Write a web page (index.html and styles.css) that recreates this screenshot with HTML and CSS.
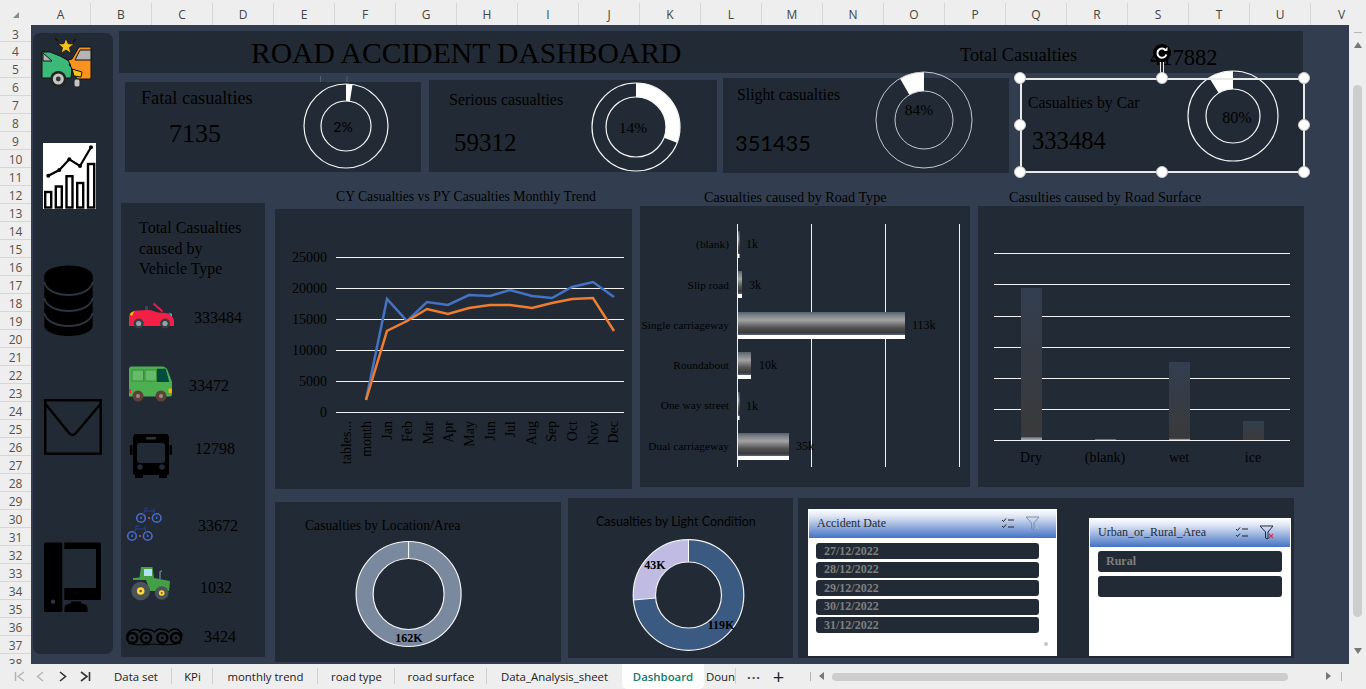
FILE: index.html
```html
<!DOCTYPE html>
<html>
<head>
  <meta charset="UTF-8">
  <title>Road Accident Dashboard</title>
  <link rel="stylesheet" href="styles.css">
</head>
<body>
<div class="app">
  <div class="col-head">
    <div class="corner"><svg width="6" height="6" viewBox="0 0 8 8"><path d="M8 0V8H0Z" fill="#8a8a8a"/></svg></div>
    <div class="col col-a">A</div><div class="col">B</div><div class="col">C</div><div class="col">D</div><div class="col">E</div><div class="col">F</div><div class="col">G</div><div class="col">H</div><div class="col">I</div><div class="col">J</div><div class="col">K</div><div class="col">L</div><div class="col">M</div><div class="col">N</div><div class="col">O</div><div class="col">P</div><div class="col">Q</div><div class="col">R</div><div class="col">S</div><div class="col">T</div><div class="col">U</div><div class="col col-v">V</div>
  </div>

  <div class="mid">
    <div class="row-head">
      <div class="rw rw-first">3</div><div class="rw">4</div><div class="rw">5</div><div class="rw">6</div><div class="rw">7</div><div class="rw">8</div><div class="rw">9</div><div class="rw">10</div><div class="rw">11</div><div class="rw">12</div><div class="rw">13</div><div class="rw">14</div><div class="rw">15</div><div class="rw">16</div><div class="rw">17</div><div class="rw">18</div><div class="rw">19</div><div class="rw">20</div><div class="rw">21</div><div class="rw">22</div><div class="rw">23</div><div class="rw">24</div><div class="rw">25</div><div class="rw">26</div><div class="rw">27</div><div class="rw">28</div><div class="rw">29</div><div class="rw">30</div><div class="rw">31</div><div class="rw">32</div><div class="rw">33</div><div class="rw">34</div><div class="rw">35</div><div class="rw">36</div><div class="rw">37</div><div class="rw">38</div>
    </div>

    <div class="sheet">
      <div class="sidebar">
        <svg class="side-icon ic-crash" viewBox="42 38 50 50">
          <path d="M42 52L50 52L60 56L71 62L69 65L72 68L71 78L42 78Z" fill="#3cb878" stroke="#111" stroke-width="1"/>
          <path d="M43 53L52 61L43 61Z" fill="#b5b5b5" stroke="#111" stroke-width="1"/>
          <circle cx="58.3" cy="79" r="8" fill="#222"/>
          <circle cx="58.3" cy="79" r="5.5" fill="#c4c4c4"/>
          <circle cx="58.3" cy="79" r="2.4" fill="#333"/>
          <path d="M91 47H79L72 59L68 60L70 64L72 70L77 79H91Z" fill="#f7931e" stroke="#111" stroke-width="1"/>
          <path d="M80 50H91V60H75Z" fill="#b5b5b5" stroke="#111" stroke-width="1"/>
          <path d="M72 69L82 72L81 77L74 76Z" fill="#f5c518" stroke="#111" stroke-width="1"/>
          <rect x="74" y="79" width="6" height="8" rx="2" fill="#c4c4c4" stroke="#222"/>
          <path d="M66 38L68.1 43.7L74.1 43.9L69.4 47.6L71 53.4L66 50L61 53.4L62.6 47.6L57.9 43.9L63.9 43.7Z" fill="#f5c518" stroke="#111" stroke-width=".8"/>
          <path d="M55 38L58 41M76 39L73 42" stroke="#111" stroke-width="1.2"/>
        </svg>
        <svg class="side-icon ic-chart" viewBox="43 143 53 66">
          <rect x="43" y="143" width="53" height="66" fill="#fff"/>
          <g fill="none" stroke="#000" stroke-width="2.4">
            <rect x="45.2" y="192" width="6" height="15.5"/>
            <rect x="55.8" y="186.5" width="6" height="21"/>
            <rect x="66.5" y="176.2" width="6" height="31.3"/>
            <rect x="77.2" y="183" width="6" height="24.5"/>
            <rect x="88" y="164" width="6.2" height="43.5"/>
          </g>
          <path d="M48.3 175.7L59.3 170L69.3 159.3L80 166L91 147.3" fill="none" stroke="#000" stroke-width="2.2"/>
          <g fill="#000"><circle cx="48.3" cy="175.7" r="2"/><circle cx="59.3" cy="170" r="2"/><circle cx="69.3" cy="159.3" r="2"/><circle cx="80" cy="166" r="2"/><circle cx="91" cy="147.3" r="2"/></g>
        </svg>
        <svg class="side-icon ic-db" viewBox="44 265 49 71">
          <ellipse cx="68.5" cy="276" rx="24.2" ry="10.5" fill="#000"/>
          <path d="M44.3 276V325.5C44.3 331.5 55 336 68.5 336S92.7 331.5 92.7 325.5V276Z" fill="#000"/>
          <g fill="none" stroke="#2b3542" stroke-width="1.8">
            <path d="M44.3 282C46 291 58 295 68.5 295S91 291 92.7 282"/>
            <path d="M44.3 298C46 307 58 311 68.5 311S91 307 92.7 298"/>
            <path d="M44.3 313C46 322 58 326 68.5 326S91 322 92.7 313"/>
          </g>
        </svg>
        <svg class="side-icon ic-mail" viewBox="44 399 58 56">
          <rect x="45.2" y="400.2" width="55.5" height="53.5" fill="none" stroke="#000" stroke-width="2.4"/>
          <path d="M45.5 404L69 433Q72.5 437 76 433L100.5 404" fill="none" stroke="#000" stroke-width="2.4"/>
        </svg>
        <svg class="side-icon ic-pc" viewBox="44 542 57 70">
          <rect x="44" y="542.5" width="18.3" height="69.5" rx="1.5" fill="#000"/>
          <circle cx="53" cy="601.7" r="2.2" fill="#2b3542"/>
          <path d="M64.3 542.5H99.5Q101 542.5 101 544V598.5Q101 600 99.5 600H64.3V588H96V549H64.3Z" fill="#000"/>
          <path d="M64.5 612V607Q66 603.5 71 603.5V601.5H81V603.5Q86 603.5 87.5 607V612Z" fill="#000"/>
        </svg>
      </div>

      <div class="main">
        <div class="title-bar">
          <h1 class="dash-title">ROAD ACCIDENT DASHBOARD</h1>
          <span class="total-label">Total Casualties</span>
          <span class="total-value">417882</span>
        </div>

        <div class="kpi-row">
          <div class="kpi kpi-fatal">
            <div>
              <div class="kpi-name">Fatal casualties</div>
              <div class="kpi-value">7135</div>
            </div>
            <svg class="ring" viewBox="300 82 92 90">
              <path d="M320.5 82V76M347 82V76" stroke="#56616f" stroke-width="1"/>
              <circle cx="346" cy="126" r="33.5" fill="none" stroke="#fff" stroke-width="17" pathLength="360" stroke-dasharray="9 351" transform="rotate(-90 346 126)"/>
              <circle cx="346" cy="126" r="42" class="ring-line"/>
              <circle cx="346" cy="126" r="25" class="ring-line"/>
              <text x="343" y="132" text-anchor="middle" class="ring-sans">2%</text>
            </svg>
          </div>
          <div class="kpi kpi-serious">
            <div>
              <div class="kpi-name">Serious casualties</div>
              <div class="kpi-value">59312</div>
            </div>
            <svg class="ring" viewBox="590 80 92 92">
              <circle cx="636" cy="127" r="37" fill="none" stroke="#fff" stroke-width="14" pathLength="360" stroke-dasharray="111 249" transform="rotate(-90 636 127)"/>
              <circle cx="636" cy="127" r="44" class="ring-line"/>
              <circle cx="636" cy="127" r="30" class="ring-line"/>
              <text x="633" y="133" text-anchor="middle" class="ring-serif">14%</text>
            </svg>
          </div>
          <div class="kpi kpi-slight">
            <div>
              <div class="kpi-name">Slight casualties</div>
              <div class="kpi-value">351435</div>
            </div>
            <svg class="ring ring-wide" viewBox="875 78 100 95">
              <circle cx="924" cy="120" r="38.5" fill="none" stroke="#fff" stroke-width="19" pathLength="360" stroke-dasharray="30 330" transform="rotate(-120 924 120)"/>
              <circle cx="924" cy="120" r="48" class="ring-line ring-soft"/>
              <circle cx="924" cy="120" r="29" class="ring-line ring-soft"/>
              <text x="919" y="115" text-anchor="middle" class="ring-serif">84%</text>
            </svg>
          </div>
          <div class="kpi kpi-car">
            <div>
              <div class="kpi-name">Casualties by Car</div>
              <div class="kpi-value">333484</div>
            </div>
            <svg class="ring ring-wide" viewBox="1185 78 100 95">
              <circle cx="1233" cy="116" r="36" fill="none" stroke="#fff" stroke-width="18" pathLength="360" stroke-dasharray="32 328" transform="rotate(-122 1233 116)"/>
              <circle cx="1233" cy="116" r="45" class="ring-line"/>
              <circle cx="1233" cy="116" r="27" class="ring-line"/>
              <text x="1237" y="123" text-anchor="middle" class="ring-car">80%</text>
            </svg>
            <div class="selection">
              <span class="rotate-stem"></span>
              <span class="rotate-handle">
                <svg width="18" height="18" viewBox="0 0 18 18"><path d="M12.8 6.5A4.6 4.6 0 1 0 13.4 10.5" fill="none" stroke="#fff" stroke-width="2"/><path d="M10.8 6.8H14.5V3Z" fill="#fff"/></svg>
              </span>
              <span class="hd hd-tl"></span><span class="hd hd-tc"></span><span class="hd hd-tr"></span>
              <span class="hd hd-ml"></span><span class="hd hd-mr"></span>
              <span class="hd hd-bl"></span><span class="hd hd-bc"></span><span class="hd hd-br"></span>
            </div>
          </div>
        </div>

        <div class="lower">
          <div class="vehicles">
            <div class="veh-title">Total Casualties<br>caused by<br>Vehicle Type</div>

            <div class="veh veh-car">
              <svg class="veh-icon" viewBox="129 302 45 26">
                <path d="M153.5 302.5L162.5 310.5" stroke="#e91e4b" stroke-width="2"/>
                <rect x="145" y="305" width="3" height="6" fill="#37474f"/>
                <path d="M129 325V316Q130 310 137 309.5L150 309L158 311.5L166 312Q172 313 174 319V325Z" fill="#f31f45"/>
                <path d="M129.5 313.5Q131 310.5 134.5 310L132 315Z" fill="#ffb300"/>
                <path d="M168.5 311.5L172 313V316Z" fill="#26c6da"/>
                <circle cx="138.7" cy="322.5" r="5" fill="#3a3f44"/><circle cx="138.7" cy="322.5" r="2.6" fill="#90a4ae"/>
                <circle cx="165" cy="322.5" r="5" fill="#3a3f44"/><circle cx="165" cy="322.5" r="2.6" fill="#90a4ae"/>
              </svg>
              <span class="veh-value">333484</span>
            </div>

            <div class="veh veh-van">
              <svg class="veh-icon" viewBox="129 365 43 37">
                <path d="M129 368Q129 365.5 131.5 365.5H162Q166 365.5 167.5 369L172 381V393Q172 395.5 170 395.5H129Z" fill="#4caf50"/>
                <rect x="132" y="369" width="11.5" height="11" fill="#66bb6a" stroke="#388e3c"/>
                <rect x="145" y="369" width="11.5" height="11" fill="#66bb6a" stroke="#388e3c"/>
                <path d="M157 367.7H165.7L169.3 381H157Z" fill="#004d40"/>
                <rect x="129" y="388" width="2" height="4" fill="#e53935"/>
                <rect x="168.5" y="387.5" width="3.5" height="4.5" rx="1" fill="#ffb300"/>
                <circle cx="138" cy="395" r="5.5" fill="#5d4037"/><circle cx="138" cy="395" r="2" fill="#a1887f"/>
                <circle cx="161" cy="395" r="5.5" fill="#5d4037"/><circle cx="161" cy="395" r="2" fill="#a1887f"/>
              </svg>
              <span class="veh-value">33472</span>
            </div>

            <div class="veh veh-bus">
              <svg class="veh-icon" viewBox="130 433 42 44">
                <rect x="130" y="444" width="2.5" height="10" fill="#000"/>
                <rect x="169.5" y="444" width="2.5" height="10" fill="#000"/>
                <path d="M136 433H166Q169 433 169 437V472Q169 474 167 474V477H159V474H143V477H135V474Q133 474 133 472V437Q133 433 136 433Z" fill="#000"/>
                <rect x="146" y="436" width="10" height="2.5" rx="1" fill="#2b3542"/>
                <rect x="137" y="442" width="28" height="20" rx="3" fill="#222b35"/>
                <circle cx="140" cy="466" r="2.8" fill="#222b35"/>
                <circle cx="162" cy="466" r="2.8" fill="#222b35"/>
              </svg>
              <span class="veh-value">12798</span>
            </div>

            <div class="veh veh-bike">
              <svg class="veh-icon" viewBox="127 506 35 35">
                <g fill="none" stroke="#4a6cc9" stroke-width="1.6">
                  <circle cx="141" cy="517" r="4.3"/><circle cx="156.7" cy="517" r="4.3"/>
                  <circle cx="132" cy="535" r="4.3"/><circle cx="147.7" cy="535" r="4.3"/>
                </g>
                <g fill="none" stroke="#2a3f8f" stroke-width="1">
                  <path d="M141 517L145 510H154L156.7 517M145 510V507H148M154 510V507"/>
                  <path d="M132 535L136 528H145L147.7 535M136 528V525H139M145 528V525"/>
                </g>
                <g fill="#4a6cc9"><circle cx="141" cy="517" r="1"/><circle cx="156.7" cy="517" r="1"/><circle cx="132" cy="535" r="1"/><circle cx="147.7" cy="535" r="1"/></g>
                <circle cx="149" cy="517" r="1" fill="#d9534f"/>
                <circle cx="140" cy="535" r="1" fill="#d9534f"/>
              </svg>
              <span class="veh-value">33672</span>
            </div>

            <div class="veh veh-tractor">
              <svg class="veh-icon" viewBox="132 564 38 36">
                <path d="M160 578V571.5Q160 570 162 570" fill="none" stroke="#607d8b" stroke-width="1.5"/>
                <path d="M141 566H152.5L154 577L170 580L169 590H150L146 579H133V577L139.5 576.5Z" fill="#43a047"/>
                <rect x="144" y="568" width="8" height="7" fill="#b3e0f5"/>
                <circle cx="140.7" cy="590" r="9.3" fill="#4a5358"/>
                <circle cx="140.7" cy="590" r="3.8" fill="#fdd835"/><circle cx="140.7" cy="590" r="1.3" fill="#795548"/>
                <circle cx="161.7" cy="592" r="6.8" fill="#4a5358"/>
                <circle cx="161.7" cy="592" r="2.8" fill="#fdd835"/><circle cx="161.7" cy="592" r="1" fill="#795548"/>
              </svg>
              <span class="veh-value">1032</span>
            </div>

            <div class="veh veh-track">
              <svg class="veh-icon" viewBox="126 627 57 18">
                <path d="M126.5 635Q129 629 134 628.5Q139 628 140 631Q143 627 147 628.5Q151 628 154.5 631Q158 627 162 628.5Q166 628 168.5 631Q172 627 177 628.5Q181 630 182.5 635" fill="none" stroke="#000" stroke-width="1.5"/>
                <g fill="none" stroke="#000" stroke-width="2.4">
                  <circle cx="132.3" cy="637" r="5"/><circle cx="146" cy="637" r="5"/><circle cx="162.3" cy="637" r="5"/><circle cx="176" cy="637" r="5"/>
                </g>
                <g fill="#000"><circle cx="132.3" cy="637" r="1.3"/><circle cx="146" cy="637" r="1.3"/><circle cx="162.3" cy="637" r="1.3"/><circle cx="176" cy="637" r="1.3"/></g>
                <path d="M128 642.5Q139 645 154 643Q170 645 181 642" fill="none" stroke="#000" stroke-width="1"/>
              </svg>
              <span class="veh-value">3424</span>
            </div>
          </div>

          <div class="charts">
            <div class="chart-row">
              <div class="chart chart-trend">
                <div class="chart-title">CY Casualties vs PY Casualties Monthly Trend</div>
                <svg class="plot" width="357" height="280" viewBox="275 209 357 280">
                  <g stroke="#f2f2f2" stroke-width="1">
                    <path d="M336 257.5H624M336 288.5H624M336 319.5H624M336 350.5H624M336 381.5H624M336 412.5H624"/>
                  </g>
                  <g class="tick" text-anchor="end">
                    <text x="327" y="262">25000</text><text x="327" y="293">20000</text><text x="327" y="324">15000</text><text x="327" y="355">10000</text><text x="327" y="386">5000</text><text x="327" y="417">0</text>
                  </g>
                  <polyline points="366,400 387,299 407,321 427,302 448,305 469,295 490,296 510,290 532,296 552,298 572,287 593,282 614,297" fill="none" stroke="#4472c4" stroke-width="2.5"/>
                  <polyline points="366,400 387,331 407,321 427,309 448,314 469,308 490,305 510,305 532,308 552,303 572,299 593,298 614,331" fill="none" stroke="#ed7d31" stroke-width="2.5"/>
                  <g class="tick" text-anchor="end">
                    <text transform="translate(351 421) rotate(-90)">tables...</text>
                    <text transform="translate(371 421) rotate(-90)">month</text>
                    <text transform="translate(392 421) rotate(-90)">Jan</text>
                    <text transform="translate(412 421) rotate(-90)">Feb</text>
                    <text transform="translate(433 421) rotate(-90)">Mar</text>
                    <text transform="translate(453 421) rotate(-90)">Apr</text>
                    <text transform="translate(474 421) rotate(-90)">May</text>
                    <text transform="translate(495 421) rotate(-90)">Jun</text>
                    <text transform="translate(515 421) rotate(-90)">Jul</text>
                    <text transform="translate(536 421) rotate(-90)">Aug</text>
                    <text transform="translate(556 421) rotate(-90)">Sep</text>
                    <text transform="translate(577 421) rotate(-90)">Oct</text>
                    <text transform="translate(598 421) rotate(-90)">Nov</text>
                    <text transform="translate(618 421) rotate(-90)">Dec</text>
                  </g>
                </svg>
              </div>

              <div class="chart chart-road">
                <div class="chart-title">Casualties caused by Road Type</div>
                <svg class="plot" width="330" height="281" viewBox="640 206 330 281">
                  <defs>
                    <linearGradient id="barShade" x1="0" y1="0" x2="0" y2="1">
                      <stop offset="0" stop-color="#566270"/>
                      <stop offset=".12" stop-color="#7c8085"/>
                      <stop offset=".3" stop-color="#a3a3a3"/>
                      <stop offset=".58" stop-color="#525252"/>
                      <stop offset=".76" stop-color="#3b3b3b"/>
                      <stop offset=".83" stop-color="#4f5a6c"/>
                      <stop offset=".86" stop-color="#5d6a80"/>
                      <stop offset=".87" stop-color="#fff"/>
                      <stop offset="1" stop-color="#fff"/>
                    </linearGradient>
                  </defs>
                  <path d="M737.5 224V467M811.5 224V467M885.5 224V467M959.5 224V467" stroke="#f2f2f2" stroke-width="1"/>
                  <g fill="url(#barShade)">
                    <rect x="738" y="231" width="1.5" height="27"/>
                    <rect x="738" y="271" width="4" height="27"/>
                    <rect x="738" y="312" width="167" height="27"/>
                    <rect x="738" y="352" width="13" height="27"/>
                    <rect x="738" y="392" width="1.5" height="28"/>
                    <rect x="738" y="433" width="51" height="27"/>
                  </g>
                  <g class="tick-sm" text-anchor="end">
                    <text x="729" y="248">(blank)</text>
                    <text x="729" y="289">Slip road</text>
                    <text x="729" y="329">Single carriageway</text>
                    <text x="729" y="369">Roundabout</text>
                    <text x="729" y="409">One way street</text>
                    <text x="729" y="450">Dual carriageway</text>
                  </g>
                  <g class="tick-val">
                    <text x="746" y="248">1k</text>
                    <text x="749" y="289">3k</text>
                    <text x="912" y="329">113k</text>
                    <text x="759" y="369">10k</text>
                    <text x="746" y="410">1k</text>
                    <text x="796" y="450">35k</text>
                  </g>
                </svg>
              </div>

              <div class="chart chart-surface">
                <div class="chart-title">Casulties caused by Road Surface</div>
                <svg class="plot" width="326" height="281" viewBox="978 206 326 281">
                  <defs>
                    <linearGradient id="surfShade" x1="0" y1="0" x2="0" y2="1">
                      <stop offset="0" stop-color="#323e4f"/>
                      <stop offset=".9" stop-color="#3a3a3c"/>
                      <stop offset=".98" stop-color="#3a3a3c"/>
                      <stop offset=".985" stop-color="#7a8498"/>
                      <stop offset="1" stop-color="#aaa"/>
                    </linearGradient>
                    <linearGradient id="iceShade" x1="0" y1="0" x2="0" y2="1">
                      <stop offset="0" stop-color="#323e4f"/>
                      <stop offset="1" stop-color="#3c3a3a"/>
                    </linearGradient>
                  </defs>
                  <path d="M994 253.5H1290M994 284.5H1290M994 316.5H1290M994 347.5H1290M994 378.5H1290M994 409.5H1290M994 440.5H1290" stroke="#f2f2f2" stroke-width="1"/>
                  <rect x="1021" y="288" width="21" height="152" fill="url(#surfShade)"/>
                  <rect x="1095" y="439" width="21" height="1" fill="#6a7280"/>
                  <rect x="1169" y="362" width="21" height="78" fill="url(#surfShade)"/>
                  <rect x="1243" y="421" width="21" height="19" fill="url(#iceShade)"/>
                  <g class="tick" text-anchor="middle">
                    <text x="1031" y="462">Dry</text>
                    <text x="1105" y="462">(blank)</text>
                    <text x="1179" y="462">wet</text>
                    <text x="1253" y="462">ice</text>
                  </g>
                </svg>
              </div>
            </div>

            <div class="bottom-row">
              <svg class="panel-loc" width="286" height="160" viewBox="275 502 286 160">
                <text x="305" y="530" class="title-loc">Casualties by Location/Area</text>
                <circle cx="408.6" cy="594" r="44" fill="none" stroke="#7b899f" stroke-width="17"/>
                <circle cx="408.6" cy="594" r="52.5" class="ring-line"/>
                <circle cx="408.6" cy="594" r="35.5" class="ring-line"/>
                <path d="M408.6 541.5V558.5" stroke="#fff" stroke-width="1"/>
                <text x="409" y="642" text-anchor="middle" class="pie-val">162K</text>
              </svg>
              <svg class="panel-light" width="225" height="160" viewBox="568 498 225 160">
                <text x="596" y="526" class="title-sans">Casualties by Light Condition</text>
                <circle cx="688.5" cy="595" r="44.2" fill="none" stroke="#3b5a82" stroke-width="22"/>
                <circle cx="688.5" cy="595" r="44.2" fill="none" stroke="#bfbbe3" stroke-width="22" pathLength="360" stroke-dasharray="95 265" transform="rotate(175 688.5 595)"/>
                <circle cx="688.5" cy="595" r="55.3" class="ring-line"/>
                <circle cx="688.5" cy="595" r="33" class="ring-line"/>
                <path d="M688.5 540V562M633.5 600L655.5 598" stroke="#fff" stroke-width="1"/>
                <text x="655" y="569" text-anchor="middle" class="pie-val">43K</text>
                <text x="721" y="629" text-anchor="middle" class="pie-val">119K</text>
              </svg>

              <div class="slicer-panel">
                <div class="slicer slicer-date">
                  <div class="slicer-head">
                    <span class="slicer-name">Accident Date</span>
                    <svg class="head-icon" width="14" height="14" viewBox="0 0 14 14"><path d="M1 3L2.5 4.5L5 1.5M1 9L2.5 10.5L5 7.5M7 3H13M7 10H13" fill="none" stroke="#222" stroke-width="1"/></svg>
                    <svg class="head-icon head-funnel" width="16" height="15" viewBox="0 0 16 15"><path d="M1 1H14L9 7V14L6.5 13V7Z" fill="none" stroke="#7d8ea8" stroke-width="1"/><path d="M10 9L14 13M14 9L10 13" stroke="#a9b6cc" stroke-width="1"/></svg>
                  </div>
                  <div class="items items-date">
                    <div class="item">27/12/2022</div>
                    <div class="item">28/12/2022</div>
                    <div class="item">29/12/2022</div>
                    <div class="item">30/12/2022</div>
                    <div class="item">31/12/2022</div>
                  </div>
                  <span class="slicer-dot"></span>
                </div>
                <div class="slicer slicer-area">
                  <div class="slicer-head">
                    <span class="slicer-name">Urban_or_Rural_Area</span>
                    <svg class="head-icon" width="14" height="14" viewBox="0 0 14 14"><path d="M1 3L2.5 4.5L5 1.5M1 9L2.5 10.5L5 7.5M7 3H13M7 10H13" fill="none" stroke="#222" stroke-width="1"/></svg>
                    <svg class="head-icon head-funnel" width="16" height="15" viewBox="0 0 16 15"><path d="M1 1H14L9 7V14L6.5 13V7Z" fill="none" stroke="#222b35" stroke-width="1"/><path d="M10 9L14 13M14 9L10 13" stroke="#d9304f" stroke-width="1.2"/></svg>
                  </div>
                  <div class="items items-area">
                    <div class="item">Rural</div>
                    <div class="item"></div>
                  </div>
                </div>
              </div>
            </div>
          </div>
        </div>
      </div>
    </div>

    <div class="vscroll">
      <span class="vs-dash"></span>
      <svg class="vs-arrow" width="8" height="6" viewBox="0 0 8 6"><path d="M4 0L8 6H0Z" fill="#777"/></svg>
      <span class="vs-thumb"></span>
      <svg class="vs-arrow vs-down" width="8" height="6" viewBox="0 0 8 6"><path d="M0 0H8L4 6Z" fill="#777"/></svg>
    </div>
  </div>

  <div class="tabs">
    <div class="tab-nav">
      <svg class="nav-first" width="12" height="11" viewBox="0 0 12 11"><path d="M1.5 1V10M10 1L4 5.500L10 10" fill="none" stroke="#b5b5b5" stroke-width="1.5"/></svg>
      <svg class="nav-prev" width="8" height="11" viewBox="0 0 8 11"><path d="M7 1L1.5 5.500L7 10" fill="none" stroke="#b5b5b5" stroke-width="1.5"/></svg>
      <svg class="nav-next" width="8" height="11" viewBox="0 0 8 11"><path d="M1 1L6.5 5.500L1 10" fill="none" stroke="#333" stroke-width="1.6"/></svg>
      <svg class="nav-last" width="12" height="11" viewBox="0 0 12 11"><path d="M10.5 1V10M2 1L8 5.500L2 10" fill="none" stroke="#333" stroke-width="1.6"/></svg>
    </div>
    <div class="tab t1">Data set</div>
    <div class="tab t2">KPi</div>
    <div class="tab t3">monthly trend</div>
    <div class="tab t4">road type</div>
    <div class="tab t5">road surface</div>
    <div class="tab t6">Data_Analysis_sheet</div>
    <div class="tab tab-on">Dashboard</div>
    <div class="tab t8">Doun</div>
    <div class="tab-more">···</div>
    <div class="tab-add">+</div>
    <span class="hs-sep"></span>
    <svg class="hs-left" width="5" height="8" viewBox="0 0 5 8"><path d="M5 0V8L0 4Z" fill="#777"/></svg>
    <span class="hs-thumb"></span>
    <svg class="hs-right" width="5" height="8" viewBox="0 0 5 8"><path d="M0 0V8L5 4Z" fill="#777"/></svg>
    <span class="hs-sep hs-sep-end"></span>
  </div>
</div>
</body>
</html>
```

FILE: styles.css
```css
* {
  box-sizing: border-box;
}
body {
  margin: 0;
  font-family: "Liberation Serif", serif;
  color: #000;
  background: #eeeeee;
}
svg {
  display: block;
  overflow: visible;
  flex: none;
}
.app {
  width: 1366px;
  height: 689px;
  display: flex;
  flex-direction: column;
  overflow: hidden;
}

/* sheet headers */
.col-head {
  height: 25px;
  display: flex;
  padding-top: 3px;
  background: #eeeeee;
  font-family: "Open Sans", sans-serif;
  font-size: 12px;
  color: #444;
  overflow: hidden;
}
.corner {
  width: 31px;
  flex: none;
  display: flex;
  justify-content: flex-end;
  align-items: flex-end;
  padding: 0 12px 7px 0;
}
.col {
  width: 61px;
  flex: none;
  display: flex;
  align-items: center;
  justify-content: center;
  border-right: 1px solid #d6d6d6;
}
.col-a {
  width: 60px;
}
.col-v {
  border-right: 0;
}
.mid {
  height: 639px;
  display: flex;
}
.row-head {
  width: 31px;
  flex: none;
  overflow: hidden;
  font-family: "Open Sans", sans-serif;
  font-size: 12px;
  color: #5a5048;
}
.rw {
  height: 18px;
  display: flex;
  align-items: center;
  justify-content: center;
  padding-top: 2px;
  border-bottom: 1px solid #d6d6d6;
}
.rw-first {
  height: 17px;
}

/* canvas */
.sheet {
  width: 1318px;
  flex: none;
  display: flex;
  align-items: flex-start;
  background: #323e4f;
  overflow: hidden;
}
.sidebar {
  width: 80px;
  height: 621px;
  flex: none;
  margin: 8px 0 0 2px;
  background: #222b35;
  border-radius: 7px;
  display: flex;
  flex-direction: column;
}
.side-icon {
  flex: none;
}
.ic-crash {
  width: 50px;
  height: 50px;
  margin: 5px 0 0 9px;
}
.ic-chart {
  width: 53px;
  height: 66px;
  margin: 55px 0 0 10px;
}
.ic-db {
  width: 49px;
  height: 71px;
  margin: 56px 0 0 11px;
}
.ic-mail {
  width: 58px;
  height: 56px;
  margin: 63px 0 0 11px;
}
.ic-pc {
  width: 57px;
  height: 70px;
  margin: 87px 0 0 11px;
}
.main {
  width: 1190px;
  flex: none;
  margin-left: 6px;
}

/* title */
.title-bar {
  width: 1184px;
  height: 42px;
  margin-top: 6px;
  background: #222b35;
  display: flex;
  align-items: center;
}
.dash-title {
  width: 709px;
  margin: 3px 0 0 132px;
  font-size: 29.6px;
  font-weight: normal;
  flex: none;
}
.total-label {
  font-size: 18.3px;
  margin: 7px 0 0 0;
  flex: none;
}
.total-value {
  font-size: 22.5px;
  margin: 12px 0 0 73px;
  flex: none;
}

/* kpi cards */
.kpi-row {
  height: 95px;
  margin-top: 5px;
  display: flex;
  align-items: flex-start;
}
.kpi {
  flex: none;
  display: flex;
  background: #222b35;
  position: relative;
}
.kpi-name {
  font-size: 16px;
  line-height: 20px;
  white-space: nowrap;
}
.kpi-value {
  line-height: 30px;
  white-space: nowrap;
}
.kpi-fatal {
  width: 296px;
  height: 90px;
  margin: 4px 0 0 6px;
  padding: 6px 0 0 16px;
}
.kpi-fatal .kpi-name {
  font-size: 18.2px;
}
.kpi-fatal .kpi-value {
  font-size: 26px;
  margin: 11px 0 0 28px;
}
.kpi-serious {
  width: 288px;
  height: 92px;
  margin: 2px 0 0 8px;
  padding: 10px 0 0 20px;
}
.kpi-serious .kpi-value {
  font-size: 25px;
  margin: 18px 0 0 5px;
}
.kpi-slight {
  width: 286px;
  height: 95px;
  margin-left: 6px;
  padding: 7px 0 0 14px;
}
.kpi-slight .kpi-name {
  font-size: 15.8px;
}
.kpi-slight .kpi-value {
  font-family: Lato, sans-serif;
  font-size: 21.8px;
  margin: 23px 0 0 -2px;
}
.kpi-car {
  width: 285px;
  height: 95px;
  margin-left: 11px;
  padding: 15px 0 0 8px;
}
.kpi-car .kpi-name {
  font-size: 15.8px;
}
.kpi-car .kpi-value {
  font-size: 24.6px;
  margin: 13px 0 0 4px;
}
.ring {
  position: absolute;
  top: 0;
  width: 92px;
  height: 90px;
}
.kpi-fatal .ring {
  left: 175px;
}
.kpi-serious .ring {
  left: 161px;
  height: 92px;
}
.ring-wide {
  width: 100px;
  height: 95px;
}
.kpi-slight .ring {
  left: 152px;
}
.kpi-car .ring {
  left: 165px;
}
.ring-line {
  fill: none;
  stroke: #f4f4f4;
  stroke-width: 1.2;
}
.ring-soft {
  stroke: #c4c8cc;
  stroke-width: 1;
}
.ring-sans {
  font-family: Lato, sans-serif;
  font-size: 14px;
}
.ring-serif {
  font-size: 15.5px;
}
.ring-car {
  font-size: 16px;
}

/* selected shape */
.selection {
  position: absolute;
  inset: 0;
  border: 2px solid #e9e9e9;
}
.hd {
  position: absolute;
  width: 12px;
  height: 12px;
  border-radius: 50%;
  background: #fff;
  border: 1px solid #c9c9c9;
}
.hd-tl, .hd-tc, .hd-tr {
  top: -8px;
}
.hd-ml, .hd-mr {
  top: 39px;
}
.hd-bl, .hd-bc, .hd-br {
  bottom: -7px;
}
.hd-tl, .hd-ml, .hd-bl {
  left: -8px;
}
.hd-tc, .hd-bc {
  left: 134px;
}
.hd-tr, .hd-mr, .hd-br {
  right: -7px;
}
.rotate-stem {
  position: absolute;
  left: 138px;
  top: -18px;
  width: 4px;
  height: 16px;
  border-left: 1px solid #e9e9e9;
  border-right: 1px solid #e9e9e9;
}
.rotate-handle {
  position: absolute;
  left: 131px;
  top: -36px;
  width: 18px;
  height: 18px;
  border-radius: 50%;
  background: #000;
}

/* lower part */
.lower {
  display: flex;
  align-items: flex-start;
}
.vehicles {
  width: 144px;
  height: 454px;
  flex: none;
  margin: 30px 0 0 2px;
  padding-top: 15px;
  background: #222b35;
}
.veh-title {
  font-size: 16px;
  line-height: 20.5px;
  padding-left: 18px;
  margin-bottom: 11px;
}
.veh {
  display: flex;
  align-items: center;
  font-size: 16px;
}
.veh-value {
  flex: none;
}
.veh-car {
  height: 50px;
}
.veh-car .veh-icon {
  width: 45px;
  height: 26px;
  margin-left: 8px;
}
.veh-car .veh-value {
  margin: 4px 0 0 20px;
}
.veh-van {
  height: 87px;
}
.veh-van .veh-icon {
  width: 43px;
  height: 37px;
  margin-left: 8px;
}
.veh-van .veh-value {
  margin: 3px 0 0 17px;
}
.veh-bus {
  height: 56px;
}
.veh-bus .veh-icon {
  width: 42px;
  height: 44px;
  margin-left: 9px;
}
.veh-bus .veh-value {
  margin: 0 0 14px 23px;
}
.veh-bike {
  height: 81px;
}
.veh-bike .veh-icon {
  width: 35px;
  height: 35px;
  margin-left: 6px;
}
.veh-bike .veh-value {
  margin: 3px 0 0 36px;
}
.veh-tractor {
  height: 36px;
}
.veh-tractor .veh-icon {
  width: 38px;
  height: 36px;
  margin-left: 11px;
}
.veh-tractor .veh-value {
  margin: 10px 0 0 30px;
}
.veh-track {
  height: 72px;
}
.veh-track .veh-icon {
  width: 57px;
  height: 18px;
  margin-left: 5px;
}
.veh-track .veh-value {
  margin: 0 0 0 21px;
}

/* charts */
.charts {
  flex: none;
  margin: 15px 0 0 10px;
}
.chart-row {
  height: 301px;
  display: flex;
  gap: 8px;
}
.chart {
  flex: none;
}
.chart-title {
  line-height: 16px;
  height: 18px;
  white-space: nowrap;
}
.chart-trend .chart-title {
  font-size: 13.7px;
  height: 21px;
  padding: 1px 0 0 61px;
}
.chart-road .chart-title {
  font-size: 14.15px;
  padding: 1px 0 0 64px;
}
.chart-surface .chart-title {
  font-size: 14.2px;
  padding: 1px 0 0 31px;
}
.plot, .panel-loc, .panel-light {
  background: #222b35;
}
.tick {
  font-size: 14px;
}
.tick-sm {
  font-size: 11.4px;
}
.tick-val {
  font-size: 12px;
}
.pie-val {
  font-size: 12px;
  font-weight: bold;
}
.title-loc {
  font-size: 13.65px;
}
.title-sans {
  font-family: Lato, sans-serif;
  font-size: 12.5px;
}

/* bottom row */
.bottom-row {
  margin-top: 9px;
  display: flex;
  align-items: flex-start;
}
.panel-loc {
  margin-top: 4px;
}
.panel-light {
  margin-left: 7px;
}
.slicer-panel {
  width: 496px;
  height: 160px;
  margin-left: 5px;
  background: #222b35;
  display: flex;
  align-items: flex-start;
}
.slicer {
  flex: none;
  background: #fff;
  padding: 0 1px;
  position: relative;
}
.slicer-date {
  width: 249px;
  height: 147px;
  margin: 11px 0 0 10px;
}
.slicer-area {
  width: 202px;
  height: 138px;
  margin: 20px 0 0 32px;
}
.slicer-head {
  height: 29px;
  display: flex;
  align-items: center;
  padding-left: 8px;
  background: linear-gradient(#ffffff, #dfe6f4 25%, #4472c4);
}
.slicer-name {
  font-size: 12px;
  flex: 1;
  color: #222b35;
}
.head-icon {
  margin-right: 10px;
}
.head-funnel {
  margin-right: 15px;
}
.items {
  display: flex;
  flex-direction: column;
  align-items: flex-start;
}
.items-date {
  padding: 5px 0 0 7px;
  gap: 2.6px;
}
.items-area {
  padding: 4px 0 0 8px;
  gap: 4px;
}
.item {
  background: #222b35;
  border-radius: 3px;
  color: #7f7f7f;
  font-size: 12px;
  font-weight: bold;
  display: flex;
  align-items: center;
  padding-left: 8px;
}
.items-date .item {
  width: 223px;
  height: 16px;
}
.items-area .item {
  width: 183.5px;
  height: 21px;
}
.slicer-dot {
  position: absolute;
  right: 9px;
  bottom: 10px;
  width: 4px;
  height: 4px;
  border-radius: 50%;
  background: #c8c8c8;
}

/* vertical scrollbar */
.vscroll {
  width: 17px;
  flex: none;
  background: #eeeeee;
  display: flex;
  flex-direction: column;
  align-items: center;
}
.vs-dash {
  width: 8px;
  height: 1px;
  margin-top: 7px;
  background: #b5b5b5;
}
.vs-arrow {
  margin-top: 9px;
}
.vs-thumb {
  width: 9px;
  height: 532px;
  margin-top: 37px;
  border-radius: 5px;
  background: #cdcdcd;
}
.vs-down {
  margin-top: 31px;
}

/* sheet tabs */
.tabs {
  height: 25px;
  flex: none;
  display: flex;
  align-items: stretch;
  background: #eeeeee;
  font-family: "Open Sans", sans-serif;
  font-size: 11.4px;
  color: #222;
}
.tab-nav {
  width: 100px;
  flex: none;
  display: flex;
  align-items: center;
}
.nav-first {
  margin-left: 14px;
}
.nav-prev {
  margin-left: 10px;
}
.nav-next {
  margin-left: 15px;
}
.nav-last {
  margin-left: 12px;
}
.tab {
  flex: none;
  display: flex;
  align-items: center;
  justify-content: center;
  white-space: nowrap;
  position: relative;
  overflow: hidden;
}
.tab::after {
  content: "";
  position: absolute;
  right: 0;
  top: 4px;
  bottom: 5px;
  width: 1px;
  background: #cfcfcf;
}
.t1 {
  width: 72px;
}
.t2 {
  width: 41px;
}
.t3 {
  width: 105px;
}
.t4 {
  width: 77px;
}
.t5 {
  width: 92px;
}
.t6 {
  width: 135px;
}
.t6::after, .tab-on::after {
  display: none;
}
.tab-on {
  width: 82px;
  background: #fff;
  border-radius: 0 0 5px 5px;
  color: #0f7b6c;
  font-weight: 600;
}
.t8 {
  width: 32px;
  justify-content: flex-start;
  padding-left: 2px;
}
.tab-more {
  width: 36px;
  flex: none;
  display: flex;
  align-items: center;
  justify-content: center;
  font-size: 13px;
  font-weight: bold;
  letter-spacing: 1px;
  color: #444;
}
.tab-add {
  width: 13px;
  flex: none;
  display: flex;
  align-items: center;
  justify-content: center;
  font-size: 20px;
  color: #222;
}
.hs-sep {
  width: 1px;
  height: 9px;
  flex: none;
  margin: 8px 0 0 25px;
  background: #b5b5b5;
}
.hs-left {
  margin: 8px 0 0 8px;
}
.hs-thumb {
  width: 456px;
  height: 8px;
  flex: none;
  margin: 9px 0 0 8px;
  border-radius: 4px;
  background: #cdcdcd;
}
.hs-right {
  margin: 8px 0 0 38px;
}
.hs-sep-end {
  margin-left: 10px;
}
```
